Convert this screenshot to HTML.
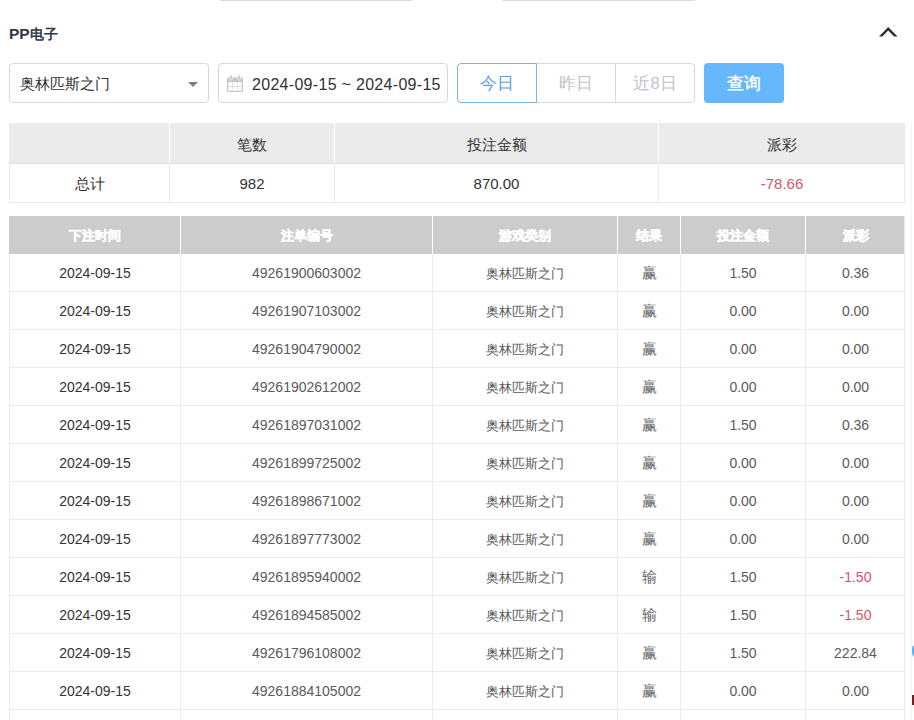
<!DOCTYPE html><html><head><meta charset="utf-8"><style>
*{box-sizing:border-box;margin:0;padding:0}
html,body{width:914px;height:720px;overflow:hidden;background:#fff}
body{position:relative;font-family:"Liberation Sans",sans-serif;font-size:14px;color:#333}
.topline{position:absolute;top:-10px;height:11px;border:1px solid #d9d9d9;border-radius:4px}
.title{position:absolute;left:9px;top:25px;font-size:15.5px;font-weight:bold;color:#2f3a4a;line-height:18px}
.chev{position:absolute;left:877px;top:25px}
.sel{position:absolute;left:9px;top:63px;width:200px;height:40px;border:1px solid #d9d9d9;border-radius:4px}
.seltxt{position:absolute;left:10px;top:10px;line-height:20px;font-size:15px;color:#333}
.caret{position:absolute;left:178px;top:18px;width:0;height:0;border-left:5px solid transparent;border-right:5px solid transparent;border-top:5px solid #808080}
.date{position:absolute;left:218px;top:63px;width:230px;height:40px;border:1px solid #d9d9d9;border-radius:4px}
.cal{position:absolute;left:8px;top:11px}
.datetxt{position:absolute;left:33px;top:11px;line-height:20px;font-size:16px;letter-spacing:0.3px;color:#333}
.bg{position:absolute;left:457px;top:63px;width:238px;height:40px}
.b{position:absolute;top:0;height:40px;line-height:38px;text-align:center;border:1px solid #d9d9d9;color:#c0c4cc;font-size:16.5px;background:#fff;padding-top:0}
.b1{left:0;width:80px;border-color:#7ab4e0;color:#64a0d8;border-radius:4px 0 0 4px;z-index:2}
.b2{left:79px;width:80px;border-left:none}
.b3{left:158px;width:80px;border-radius:0 4px 4px 0}
.query{position:absolute;left:704px;top:63px;width:80px;height:40px;background:#67b7fd;border-radius:4px;color:#fff;text-align:center;line-height:40px;font-size:16.5px;-webkit-text-stroke:0.4px #fff}
.sh{position:absolute;top:123px;height:41px;background:#ebebeb;line-height:40px;padding-top:2px;border-bottom:1px solid #e0e0e0;text-align:center;color:#333;font-size:15px;border-left:1px solid #fff}
.sv{position:absolute;top:164px;height:39px;line-height:39px;text-align:center;color:#333;font-size:15px;border-left:1px solid #ebebeb;border-bottom:1px solid #ebebeb}
.sumframe{position:absolute;left:904px;top:123px;width:1px;height:80px;background:#ebebeb}
.red,.dc.red{color:#d65468}
.dh{position:absolute;top:216px;height:38px;background:#cccccc;color:#fff;font-weight:bold;text-align:center;line-height:38px;font-size:13px;padding-top:1px;border-left:1px solid #fff;-webkit-text-stroke:0.5px #fff}
.dc{position:absolute;height:38px;line-height:38px;text-align:center;border-bottom:1px solid #ebebeb;border-left:1px solid #ebebeb;color:#5a5a5a}
.dc.d0{color:#333}
.dc.cn{font-size:13px;padding-top:1px}
.dc.res{font-size:14.5px;padding-top:0;color:#666}
.detframe{position:absolute;left:904px;top:216px;width:1px;height:520px;background:#ebebeb}
.blob1{position:absolute;left:912px;top:645px;width:8px;height:12px;background:#62aee8;border-radius:6px}
.blob2{position:absolute;left:912px;top:695px;width:4px;height:10px;background:#6e2222}
.vline{position:absolute;left:911px;top:123px;width:1px;height:597px;background:#f6f6f6}

</style></head><body>
<div class="topline" style="left:218px;width:197px"></div>
<div class="topline" style="left:500px;width:197px"></div>
<div class="title">PP<span style="font-size:14px">电子</span></div>
<svg class="chev" width="22" height="14" viewBox="0 0 22 14"><path d="M11.2 2 L2 11.6 L5.4 11.6 L11.2 5.5 L17 11.6 L20.5 11.6 Z" fill="#2b3038"/></svg>
<div class="sel"><span class="seltxt">奥林匹斯之门</span><span class="caret"></span></div>
<div class="date"><svg class="cal" width="16" height="17" viewBox="0 0 16 17"><rect x="0" y="2.5" width="16" height="14.5" rx="1.2" fill="#c6c6c6"/><rect x="1.3" y="7.2" width="13.4" height="8.6" fill="#fff"/><g fill="#d6d6d6"><rect x="1.3" y="11.1" width="13.4" height="0.8"/><rect x="5.4" y="7.2" width="0.8" height="8.6"/><rect x="9.8" y="7.2" width="0.8" height="8.6"/></g><rect x="2.6" y="0" width="2.6" height="5.2" rx="1.3" fill="#c6c6c6" stroke="#fff" stroke-width="0.6"/><rect x="10.8" y="0" width="2.6" height="5.2" rx="1.3" fill="#c6c6c6" stroke="#fff" stroke-width="0.6"/></svg><span class="datetxt">2024-09-15 ~ 2024-09-15</span></div>
<div class="bg"><div class="b b1">今日</div><div class="b b2">昨日</div><div class="b b3">近8日</div></div>
<div class="query">查询</div>

<div class="sh" style="left:9px;width:160px;border-left:none"></div>
<div class="sv" style="left:9px;width:160px">总计</div>
<div class="sh" style="left:169px;width:165px">笔数</div>
<div class="sv" style="left:169px;width:165px">982</div>
<div class="sh" style="left:334px;width:324px">投注金额</div>
<div class="sv" style="left:334px;width:324px">870.00</div>
<div class="sh" style="left:658px;width:247px">派彩</div>
<div class="sv" style="left:658px;width:247px"><span class="red">-78.66</span></div>
<div class="sumframe"></div>
<div class="dh" style="left:9px;width:171px;border-left:none">下注时间</div>
<div class="dh" style="left:180px;width:252px">注单编号</div>
<div class="dh" style="left:432px;width:185px">游戏类别</div>
<div class="dh" style="left:617px;width:63px">结果</div>
<div class="dh" style="left:680px;width:125px">投注金额</div>
<div class="dh" style="left:805px;width:100px">派彩</div>
<div class="dc d0" style="left:9px;top:254px;width:171px">2024-09-15</div>
<div class="dc" style="left:180px;top:254px;width:252px">49261900603002</div>
<div class="dc cn" style="left:432px;top:254px;width:185px">奥林匹斯之门</div>
<div class="dc cn res" style="left:617px;top:254px;width:63px">赢</div>
<div class="dc" style="left:680px;top:254px;width:125px">1.50</div>
<div class="dc" style="left:805px;top:254px;width:100px">0.36</div>
<div class="dc d0" style="left:9px;top:292px;width:171px">2024-09-15</div>
<div class="dc" style="left:180px;top:292px;width:252px">49261907103002</div>
<div class="dc cn" style="left:432px;top:292px;width:185px">奥林匹斯之门</div>
<div class="dc cn res" style="left:617px;top:292px;width:63px">赢</div>
<div class="dc" style="left:680px;top:292px;width:125px">0.00</div>
<div class="dc" style="left:805px;top:292px;width:100px">0.00</div>
<div class="dc d0" style="left:9px;top:330px;width:171px">2024-09-15</div>
<div class="dc" style="left:180px;top:330px;width:252px">49261904790002</div>
<div class="dc cn" style="left:432px;top:330px;width:185px">奥林匹斯之门</div>
<div class="dc cn res" style="left:617px;top:330px;width:63px">赢</div>
<div class="dc" style="left:680px;top:330px;width:125px">0.00</div>
<div class="dc" style="left:805px;top:330px;width:100px">0.00</div>
<div class="dc d0" style="left:9px;top:368px;width:171px">2024-09-15</div>
<div class="dc" style="left:180px;top:368px;width:252px">49261902612002</div>
<div class="dc cn" style="left:432px;top:368px;width:185px">奥林匹斯之门</div>
<div class="dc cn res" style="left:617px;top:368px;width:63px">赢</div>
<div class="dc" style="left:680px;top:368px;width:125px">0.00</div>
<div class="dc" style="left:805px;top:368px;width:100px">0.00</div>
<div class="dc d0" style="left:9px;top:406px;width:171px">2024-09-15</div>
<div class="dc" style="left:180px;top:406px;width:252px">49261897031002</div>
<div class="dc cn" style="left:432px;top:406px;width:185px">奥林匹斯之门</div>
<div class="dc cn res" style="left:617px;top:406px;width:63px">赢</div>
<div class="dc" style="left:680px;top:406px;width:125px">1.50</div>
<div class="dc" style="left:805px;top:406px;width:100px">0.36</div>
<div class="dc d0" style="left:9px;top:444px;width:171px">2024-09-15</div>
<div class="dc" style="left:180px;top:444px;width:252px">49261899725002</div>
<div class="dc cn" style="left:432px;top:444px;width:185px">奥林匹斯之门</div>
<div class="dc cn res" style="left:617px;top:444px;width:63px">赢</div>
<div class="dc" style="left:680px;top:444px;width:125px">0.00</div>
<div class="dc" style="left:805px;top:444px;width:100px">0.00</div>
<div class="dc d0" style="left:9px;top:482px;width:171px">2024-09-15</div>
<div class="dc" style="left:180px;top:482px;width:252px">49261898671002</div>
<div class="dc cn" style="left:432px;top:482px;width:185px">奥林匹斯之门</div>
<div class="dc cn res" style="left:617px;top:482px;width:63px">赢</div>
<div class="dc" style="left:680px;top:482px;width:125px">0.00</div>
<div class="dc" style="left:805px;top:482px;width:100px">0.00</div>
<div class="dc d0" style="left:9px;top:520px;width:171px">2024-09-15</div>
<div class="dc" style="left:180px;top:520px;width:252px">49261897773002</div>
<div class="dc cn" style="left:432px;top:520px;width:185px">奥林匹斯之门</div>
<div class="dc cn res" style="left:617px;top:520px;width:63px">赢</div>
<div class="dc" style="left:680px;top:520px;width:125px">0.00</div>
<div class="dc" style="left:805px;top:520px;width:100px">0.00</div>
<div class="dc d0" style="left:9px;top:558px;width:171px">2024-09-15</div>
<div class="dc" style="left:180px;top:558px;width:252px">49261895940002</div>
<div class="dc cn" style="left:432px;top:558px;width:185px">奥林匹斯之门</div>
<div class="dc cn res" style="left:617px;top:558px;width:63px">输</div>
<div class="dc" style="left:680px;top:558px;width:125px">1.50</div>
<div class="dc red" style="left:805px;top:558px;width:100px">-1.50</div>
<div class="dc d0" style="left:9px;top:596px;width:171px">2024-09-15</div>
<div class="dc" style="left:180px;top:596px;width:252px">49261894585002</div>
<div class="dc cn" style="left:432px;top:596px;width:185px">奥林匹斯之门</div>
<div class="dc cn res" style="left:617px;top:596px;width:63px">输</div>
<div class="dc" style="left:680px;top:596px;width:125px">1.50</div>
<div class="dc red" style="left:805px;top:596px;width:100px">-1.50</div>
<div class="dc d0" style="left:9px;top:634px;width:171px">2024-09-15</div>
<div class="dc" style="left:180px;top:634px;width:252px">49261796108002</div>
<div class="dc cn" style="left:432px;top:634px;width:185px">奥林匹斯之门</div>
<div class="dc cn res" style="left:617px;top:634px;width:63px">赢</div>
<div class="dc" style="left:680px;top:634px;width:125px">1.50</div>
<div class="dc" style="left:805px;top:634px;width:100px">222.84</div>
<div class="dc d0" style="left:9px;top:672px;width:171px">2024-09-15</div>
<div class="dc" style="left:180px;top:672px;width:252px">49261884105002</div>
<div class="dc cn" style="left:432px;top:672px;width:185px">奥林匹斯之门</div>
<div class="dc cn res" style="left:617px;top:672px;width:63px">赢</div>
<div class="dc" style="left:680px;top:672px;width:125px">0.00</div>
<div class="dc" style="left:805px;top:672px;width:100px">0.00</div>
<div class="dc d0" style="left:9px;top:710px;width:171px">2024-09-15</div>
<div class="dc" style="left:180px;top:710px;width:252px">49261884105002</div>
<div class="dc cn" style="left:432px;top:710px;width:185px">奥林匹斯之门</div>
<div class="dc cn res" style="left:617px;top:710px;width:63px">赢</div>
<div class="dc" style="left:680px;top:710px;width:125px">0.00</div>
<div class="dc" style="left:805px;top:710px;width:100px">0.00</div>
<div class="detframe"></div>
<div class="blob1"></div><div class="blob2"></div><div class="vline"></div>
</body></html>
